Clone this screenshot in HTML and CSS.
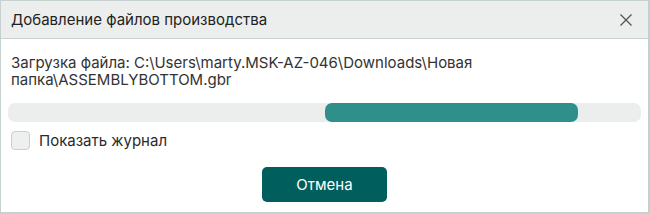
FILE: index.html
```html
<!DOCTYPE html>
<html lang="ru">
<head>
<meta charset="utf-8">
<link rel="stylesheet" href="styles.css">
</head>
<body>
<div class="dialog">
  <div class="header">
    <div class="title">Добавление файлов производства</div>
    <button class="close" aria-label="Закрыть">
      <svg width="12" height="12" viewBox="0 0 12 12"><path d="M0.5 0.5 L11.5 11.5 M11.5 0.5 L0.5 11.5" stroke="#555" stroke-width="1.3" fill="none"/></svg>
    </button>
  </div>
  <div class="content">
    <div class="status">Загрузка файла: C:\Users\marty.MSK-AZ-046\Downloads\Новая папка\ASSEMBLYBOTTOM.gbr</div>
    <div class="track"><div class="fill" style="margin-left:317px;width:253px"></div></div>
    <label class="check"><span class="box"></span><span class="check-label">Показать журнал</span></label>
    <div class="actions"><button class="cancel">Отмена</button></div>
  </div>
</div>
</body>
</html>
```
FILE: styles.css
```css
* { box-sizing: border-box; }
html, body { margin: 0; padding: 0; background: #fff; }
body { font-family: Inter, "Noto Sans", sans-serif; color: #333; }
.dialog {
  width: 650px;
  height: 214px;
  border: 1px solid #c5d1d1;
  border-bottom-width: 2px;
  border-right-width: 2px;
  display: flex;
  flex-direction: column;
}
.header {
  height: 38px;
  background: #eceeed;
  border-bottom: 1px solid #c9d3d3;
  display: flex;
  align-items: center;
  justify-content: space-between;
  padding: 0 16px 0 10px;
}
.title { font-size: 15px; color: #222; }
.close {
  border: 0;
  background: none;
  padding: 0;
  width: 12px;
  height: 12px;
  display: flex;
}
.content {
  padding: 0 7px;
  display: flex;
  flex-direction: column;
}
.status {
  font-size: 15px;
  line-height: 17px;
  margin: 15px 0 0 3px;
  color: #333;
}
.track {
  margin-top: 15px;
  height: 19px;
  border-radius: 7px;
  background: #ebeeed;
  display: flex;
}
.fill {
  height: 100%;
  border-radius: 7px;
  background: #2f8f8b;
}
.check {
  margin: 9px 0 0 3px;
  display: flex;
  align-items: center;
  gap: 9px;
}
.box {
  width: 19px;
  height: 19px;
  border: 1px solid #c9d1d0;
  border-radius: 4px;
  background: #eef0f0;
}
.check-label { font-size: 15px; color: #2a2a2a; }
.actions {
  display: flex;
  justify-content: center;
  margin-top: 17px;
}
.cancel {
  width: 125px;
  height: 35px;
  border: 0;
  border-radius: 5px;
  background: #005f5c;
  color: #fff;
  font-family: Inter, "Noto Sans", sans-serif;
  font-size: 15px;
}
```
